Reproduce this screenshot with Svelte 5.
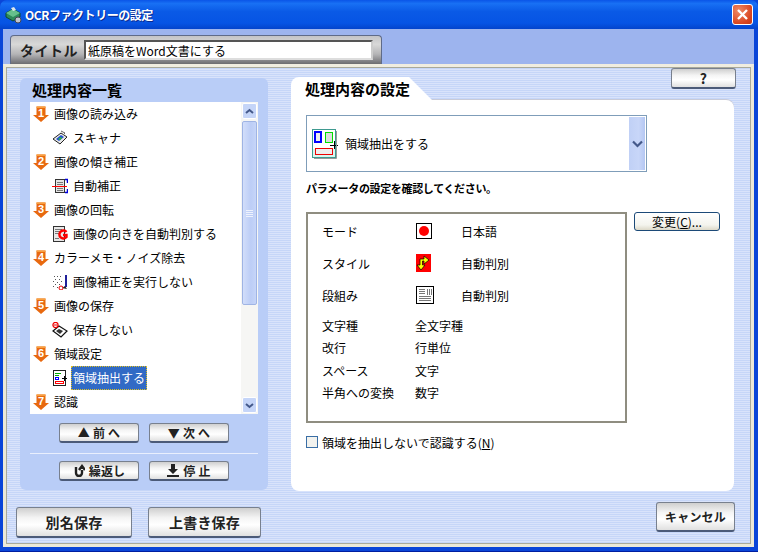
<script>
  const steps = [
    { n: 1, title: '画像の読み込み', sub: 'スキャナ', icon: 'scan' },
    { n: 2, title: '画像の傾き補正', sub: '自動補正', icon: 'skew' },
    { n: 3, title: '画像の回転', sub: '画像の向きを自動判別する', icon: 'rot' },
    { n: 4, title: 'カラーメモ・ノイズ除去', sub: '画像補正を実行しない', icon: 'noise' },
    { n: 5, title: '画像の保存', sub: '保存しない', icon: 'save' },
    { n: 6, title: '領域設定', sub: '領域抽出する', icon: 'area', selected: true },
    { n: 7, title: '認識' }
  ];
  const details = [
    ['文字種', '全文字種'],
    ['改行', '行単位'],
    ['スペース', '文字'],
    ['半角への変換', '数字']
  ];
</script>

{#snippet subIcon(kind)}
  <svg class="subicon" width="16" height="16" viewBox="0 0 16 16">
    {#if kind === 'scan'}
      <path d="M1 9 L9 3 L15 7 L8 14 Z" fill="#e8e8e8" stroke="#222" />
      <path d="M4 9 L9 5 L12 7 L7 11 Z" fill="#2050d0" />
      <path d="M6 9 L9 7 L10 8 L8 10 Z" fill="#30c030" />
      <path d="M9 1 L13 3 L11 5" fill="none" stroke="#666" />
    {:else if kind === 'skew'}
      <rect x="3.5" y="1.5" width="9" height="13" fill="#e4e4e4" stroke="#333" />
      <path d="M5 4.5H11M5 6.5H11M5 10.5H11M5 12.5H11" stroke="#777" />
      <path d="M0 8.5H15" stroke="#f00" />
      <path d="M13 1.5 H15.5 V5 M13 14.5 H15.5 V11" fill="none" stroke="#00d" stroke-width="1.5" />
    {:else if kind === 'rot'}
      <rect x="1.5" y="0.5" width="11" height="15" fill="#e8e8e8" stroke="#333" />
      <path d="M3 3.5H10M3 5.5H10M3 7.5H7M3 12.5H7" stroke="#777" />
      <path d="M14.5 6 A4 4 0 1 0 14.5 11 V9 H11" fill="none" stroke="#f00" stroke-width="2.4" />
    {:else if kind === 'noise'}
      <path d="M2 2h1v1h-1zM5 2h1v1h-1zM8 2h1v1h-1zM3 5h1v1h-1zM7 5h1v1h-1zM1 7h1v1h-1zM5 8h1v1h-1zM9 7h1v1h-1zM3 10h1v1h-1zM7 10h1v1h-1zM1 12h1v1h-1zM5 13h1v1h-1z" fill="#555" />
      <path d="M14 1V13" stroke="#20209a" stroke-width="2" />
      <path d="M10 14 L13 12 L15 15 Z" fill="#222" />
      <circle cx="9" cy="14" r="2" fill="none" stroke="#e00" />
    {:else if kind === 'save'}
      <path d="M1 9 L7 4 L15 9 L9 15 Z" fill="#fff" stroke="#111" stroke-width="1.2" />
      <path d="M4 9 L7 7 L11 9 L8 12 Z" fill="#333" />
      <circle cx="3.5" cy="3" r="2.6" fill="#fff" stroke="#e00" stroke-width="1.2" />
      <path d="M1.5 3H5.5" stroke="#e00" />
    {:else}
      <rect x="1.5" y="0.5" width="12" height="15" fill="#fff" stroke="#222" />
      <path d="M3 3.5H9M3 5.5H7" stroke="#0a0" />
      <rect x="3.5" y="7.5" width="3" height="2" fill="none" stroke="#00f" />
      <rect x="3.5" y="11.5" width="8" height="2" fill="none" stroke="#f00" />
      <path d="M10 8.5H15M12.5 6V11" stroke="#000" />
    {/if}
  </svg>
{/snippet}

<div class="window">
  <header class="titlebar">
    <svg class="appicon" width="18" height="18" viewBox="0 0 18 18">
      <path d="M1 7 L8 3 L15 7 L15 11 L8 15 L1 11 Z" fill="#2d8a5a" stroke="#0c4a33" />
      <path d="M1 7 L8 11 L15 7 L8 3 Z" fill="#66c08c" />
      <path d="M6 2 L9 1 L11 4 L8 5 Z" fill="#dfe7ea" />
      <circle cx="13" cy="14" r="3" fill="#c0c4d0" stroke="#445" />
    </svg>
    <span class="apptitle">OCRファクトリーの設定</span>
    <button class="close" aria-label="閉じる">
      <svg width="13" height="13" viewBox="0 0 13 13"><path d="M2 2 L11 11 M11 2 L2 11" stroke="#fff" stroke-width="2.4" /></svg>
    </button>
  </header>

  <div class="client">
    <div class="titleband">
      <div class="titletab">
        <span class="titlelabel">タイトル</span>
        <input class="titleinput" value="紙原稿をWord文書にする" />
      </div>
    </div>

    <div class="panel">
      <div class="columns">
        <section class="left">
          <h2>処理内容一覧</h2>
          <div class="listbox">
            <ul>
              {#each steps as s}
                <li class="row">
                  <svg class="arrow" width="16" height="16" viewBox="0 0 16 16">
                    <path d="M3.5 0.5 H12.5 V9 H16 L8 16 L0 9 H3.5 Z" fill="#e8690f" />
                    <path d="M3.5 0.5 H12.5 V2 H3.5 Z" fill="#f8a040" />
                    <text x="8" y="10.5" text-anchor="middle" class="num">{s.n}</text>
                  </svg>
                  <span>{s.title}</span>
                </li>
                {#if s.sub}
                  <li class="row sub">
                    {@render subIcon(s.icon)}
                    <span class:selected={s.selected}>{s.sub}</span>
                  </li>
                {/if}
              {/each}
            </ul>
            <div class="scrollbar">
              <div class="sbtn"><svg width="9" height="7" viewBox="0 0 9 7"><path d="M1 5 L4.5 2 L8 5" fill="none" stroke="#44598a" stroke-width="2" /></svg></div>
              <div class="thumb"><i></i><i></i><i></i><i></i></div>
              <div class="track"></div>
              <div class="sbtn"><svg width="9" height="7" viewBox="0 0 9 7"><path d="M1 2 L4.5 5 L8 2" fill="none" stroke="#44598a" stroke-width="2" /></svg></div>
            </div>
          </div>
          <div class="btnrow">
            <button class="gbtn">▲ 前 へ</button>
            <button class="gbtn">▼ 次 へ</button>
          </div>
          <hr />
          <div class="btnrow two">
            <button class="gbtn">
              <svg width="12" height="13" viewBox="0 0 12 13"><path d="M3 3 V9 A3 3 0 0 0 9 9 V6 M6 6 L9 2 L12 6" fill="none" stroke="#222" stroke-width="2.4" /></svg>
              繰返し
            </button>
            <button class="gbtn">
              <svg width="12" height="13" viewBox="0 0 12 13"><path d="M4 0 H8 V5 H11 L6 10 L1 5 H4 Z M0 11 H12 V13 H0 Z" fill="#222" /></svg>
              停 止
            </button>
          </div>
        </section>

        <section class="right">
          <div class="tabhead">
            <div class="tab">処理内容の設定</div>
            <button class="gbtn help">?</button>
          </div>
          <div class="sheet">
            <div class="combo">
              <svg width="26" height="30" viewBox="0 0 26 30">
                <rect width="24" height="29" fill="#3f9a90" />
                <rect x="1" y="1" width="22" height="19" fill="#fff" />
                <rect x="1" y="20" width="22" height="8" fill="#d8f6f0" />
                <rect x="3" y="3" width="6" height="10" fill="#eee" stroke="#00f" stroke-width="2" />
                <rect x="13.5" y="3.5" width="7" height="10" fill="#ddd" stroke="#0d0" />
                <rect x="3.5" y="19.5" width="17" height="6" fill="#eee" stroke="#e00" />
                <path d="M18 16.5H26M22.5 12V20" stroke="#000" />
                <path d="M24.5 2V29.5H2" fill="none" stroke="#999" />
              </svg>
              <span class="combotext">領域抽出をする</span>
              <div class="combobtn">
                <svg width="11" height="8" viewBox="0 0 11 8"><path d="M1 1.5 L5.5 6 L10 1.5" fill="none" stroke="#44598a" stroke-width="2.2" /></svg>
              </div>
            </div>

            <p class="confirm">パラメータの設定を確認してください。</p>

            <div class="paramarea">
              <div class="parambox">
                <div class="prow">
                  <span class="pname">モード</span>
                  <span class="picon">
                    <svg width="16" height="16" viewBox="0 0 16 16"><rect x="0.5" y="0.5" width="15" height="15" fill="#fff" stroke="#000" /><circle cx="8" cy="8" r="5" fill="#f00" /></svg>
                  </span>
                  <span>日本語</span>
                </div>
                <div class="prow">
                  <span class="pname">スタイル</span>
                  <span class="picon">
                    <svg width="15" height="18" viewBox="0 0 15 18"><rect width="15" height="18" fill="#f00" /><path d="M4 9 V5 H8 V2 L13 6 L8 10 V7 H6.5 V11 H9 L5 16 L1 11 H4 Z" fill="#ff0" stroke="#000" stroke-width="0.7" /></svg>
                  </span>
                  <span>自動判別</span>
                </div>
                <div class="prow">
                  <span class="pname">段組み</span>
                  <span class="picon">
                    <svg width="18" height="18" viewBox="0 0 18 18"><rect x="0.5" y="0.5" width="17" height="17" fill="#fff" stroke="#000" /><path d="M3 3.5H9M3 5.5H9M3 7.5H9M11.5 3V9M13.5 3V9M15.5 3V9M3 10.5H15M3 12.5H15M3 14.5H15" stroke="#777" /></svg>
                  </span>
                  <span>自動判別</span>
                </div>
                <div class="dlist">
                  {#each details as d}
                    <div class="drow"><span class="dname">{d[0]}</span><span>{d[1]}</span></div>
                  {/each}
                </div>
              </div>
              <button class="change"><span>変更(<u>C</u>)...</span></button>
            </div>

            <label class="check"><span class="box"></span><span>領域を抽出しないで認識する(<u>N</u>)</span></label>
          </div>
        </section>
      </div>

      <div class="footer">
        <button class="gbtn big">別名保存</button>
        <button class="gbtn big b2">上書き保存</button>
        <button class="gbtn big cancel">キャンセル</button>
      </div>
    </div>
  </div>
</div>

<style>
  :global(body) { margin: 0; background: #0b3fd0; }
  * { box-sizing: border-box; }
  .window {
    width: 758px; height: 552px; display: flex; flex-direction: column;
    font-family: "Noto Sans CJK JP", "Noto Sans", sans-serif; font-size: 12px; color: #000;
    background: #0a45d8; padding: 0 4px 4px 3px;
    border-bottom: 1px solid #001ea0;
  }
  .titlebar {
    height: 29px; margin: 0 -4px 0 -3px; padding: 0 5px 0 5px; display: flex; align-items: center; gap: 2px; flex: none;
    background: linear-gradient(#0a55e8 0%, #1870f4 12%, #0a5ae6 40%, #0654e4 80%, #0344cc 100%);
    border-radius: 7px 7px 0 0;
  }
  .appicon { flex: none; }
  .apptitle { color: #fff; font-weight: 700; font-size: 12px; letter-spacing: -0.45px; flex: 1; text-shadow: 1px 1px 0 #0a2a90; }
  .close {
    width: 21px; height: 21px; margin-top: 0; padding: 0; border: 1px solid #fff; border-radius: 3px;
    background: radial-gradient(circle at 30% 30%, #ee8a66, #d9451f 70%, #c23a18);
    display: flex; align-items: center; justify-content: center;
  }
  .client { flex: 1; display: flex; flex-direction: column; min-height: 0; background: #9db4ee; }
  .titleband { height: 35px; padding: 6px 0 0 7px; flex: none; }
  .titletab {
    width: 372px; height: 29px; display: flex; align-items: center; gap: 6px; padding-left: 9px;
    border-radius: 4px 4px 0 0; border: 1px solid #5f6b88; border-bottom: none;
    background: linear-gradient(#c4c4c6, #d8d8d8 30%, #b4b4b6 65%, #6c6c70);
  }
  .titlelabel { font-weight: 700; font-size: 14px; letter-spacing: 0.5px; color: #222; }
  .titleinput {
    width: 289px; height: 20px; margin: 0; padding: 1px 2px; font: inherit; font-size: 12px;
    border: 2px solid; border-color: #555 #ccc #ddd #555; background: #fff; outline: none; color: #000;
  }
  .panel {
    flex: 1; min-height: 0; display: flex; flex-direction: column;
    border: 3px solid #ece9d8; border-top-color: #f0ede0; outline: 0;
    padding: 11px 16px 0 14px;
    background: repeating-linear-gradient(#d9e3fb 0 1px, #c6d6f8 1px 2px);
    box-shadow: inset 0 0 0 1px #a9a99a;
  }
  .columns { display: flex; align-items: flex-start; gap: 23px; flex: none; }
  .left {
    width: 248px; height: 412px; background: #b9cdf7; border-radius: 6px; padding: 0 10px 0 10px;
    flex: none;
  }
  h2 { margin: 0; height: 24px; padding-top: 3px; padding-left: 2px; font-size: 15px; font-weight: 700; line-height: 18px; }
  .listbox { height: 312px; background: #fff; display: flex; overflow: hidden; }
  ul { list-style: none; margin: 0; padding: 0; flex: 1; min-width: 0; }
  .row { height: 24px; display: flex; align-items: center; padding-left: 3px; gap: 4px; white-space: nowrap; }
  .row.sub { padding-left: 22px; }
  .num { font-family: "Liberation Sans", sans-serif; font-size: 11px; font-weight: 700; fill: #fff; }
  .row span { padding: 0 1px; height: 24px; line-height: 24px; }
  .row span.selected { background: #316ac5; color: #fff; outline: 1px dotted #e0c020; outline-offset: -1px; margin-left: -1px; padding: 0 2px; }
  .scrollbar { width: 17px; flex: none; display: flex; flex-direction: column; background: #f6f6f4; padding: 0 1px; }
  .sbtn {
    height: 16px; flex: none; border: 1px solid #fff; border-radius: 2px; background: #c5d5f8;
    display: flex; align-items: center; justify-content: center; margin: 1px 0;
  }
  .thumb {
    height: 184px; flex: none; border: 1px solid #9fb4e4; border-radius: 2px; background: linear-gradient(90deg, #d2defa, #bccdf6 60%, #c6d5f8);
    display: flex; flex-direction: column; align-items: center; justify-content: center; gap: 1px;
    margin-top: 1px;
  }
  .thumb i { display: block; width: 7px; height: 1px; background: #eef2fd; }
  .track { flex: 1; }
  .btnrow { display: flex; gap: 10px; margin-top: 9px; padding-left: 29px; }
  .gbtn {
    width: 80px; height: 20px; padding: 0; font: inherit; font-weight: 700; color: #222; letter-spacing: 0.2px;
    border: 1px solid #78808e; border-bottom: 2px solid #4b5a78; border-radius: 3px;
    background: linear-gradient(#cfcfcf, #f4f4f4 35%, #ffffff 60%, #e0e0e0);
    display: inline-flex; align-items: center; justify-content: center; gap: 4px;
  }
  hr { height: 1px; margin: 10px 0 0; border: 0; background: #e9effd; }
  .btnrow.two { margin-top: 7px; }
  .right { width: 443px; flex: none; margin-top: -5px; }
  .tabhead { height: 27px; display: flex; align-items: flex-start; justify-content: space-between; }
  .tab {
    width: 145px; height: 27px; margin-top: 4px; padding: 2px 0 0 14px; font-size: 15px; font-weight: 700; line-height: 20px;
    background: #fff; border-top-left-radius: 8px; clip-path: polygon(0 0, 118px 0, 145px 100%, 0 100%);
  }
  .help { width: 65px; height: 21px; margin: -5px -2px 0 0; font-size: 14px; }
  .sheet {
    height: 391px; background: #fff; border-radius: 0 8px 8px 8px; padding: 15px 0 0 15px;
    display: flex; flex-direction: column; box-shadow: 0 -1px 0 #c9cbd8;
  }
  .combo {
    width: 341px; height: 57px; border: 1px solid #7f9db9; display: flex; align-items: center; padding: 1px 1px 1px 5px; flex: none;
  }
  .combotext { flex: 1; padding-left: 7px; }
  .combobtn {
    width: 16px; height: 53px; background: linear-gradient(90deg, #c0d0f6, #c8d6f8 60%, #b4c7f3); display: flex; align-items: center; justify-content: center;
  }
  .confirm { margin: 7px 0 0; height: 18px; line-height: 18px; font-weight: 700; font-size: 11px; letter-spacing: -0.35px; }
  .paramarea { display: flex; gap: 7px; align-items: flex-start; margin-top: 15px; flex: none; }
  .parambox { width: 321px; height: 211px; border: 2px solid #8f8d80; padding: 1px 0 0 14px; flex: none; }
  .prow { height: 32px; display: flex; align-items: center; }
  .pname { width: 94px; }
  .picon { width: 45px; display: flex; align-items: center; }
  .dlist { margin-top: 3px; }
  .drow { height: 22.5px; display: flex; align-items: center; }
  .dname { width: 93px; }
  .change {
    width: 86px; height: 19px; padding: 0; font: inherit; color: #000; border: 1px solid #1c4a78; border-radius: 3px;
    background: linear-gradient(#ffffff, #f4f4ee 70%, #dcd8c8); display: flex; align-items: center; justify-content: center;
  }
  .check { display: flex; align-items: center; gap: 4px; margin-top: 10px; height: 18px; }
  .box { width: 12px; height: 12px; border: 1px solid #3a6ea5; background: #f2f2ee; display: block; }
  .footer { flex: 1; display: flex; align-items: flex-start; }
  .big { width: 116px; height: 31px; font-size: 14px; margin: 16px 0 0 -4px; }
  .b2 { width: 113px; margin-left: 16px; }
  .cancel { width: 79px; height: 30px; margin: 11px 0 0 auto; font-size: 12px; }
</style>
